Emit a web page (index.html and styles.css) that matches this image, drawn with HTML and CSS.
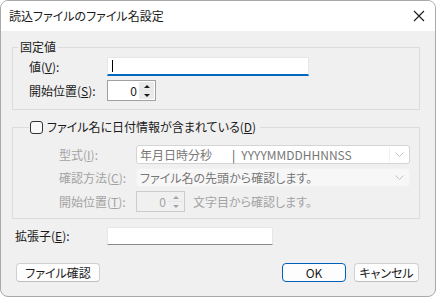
FILE: index.html
```html
<!DOCTYPE html>
<html>
	<head>
		<meta charset="utf-8">
		<link rel="stylesheet" href="styles.css">
	</head>
	<body>
		<div class="window">
			<div class="titlebar">
				<span class="title">読込ファイルのファイル名設定</span>
				<svg class="close" width="12" height="12" viewBox="0 0 12 12">
					<path d="M1 1 L11 11 M11 1 L1 11" stroke="#1a1a1a" stroke-width="1.1" fill="none" />
				</svg>
			</div>
			<div class="content">
				<fieldset class="group fixed">
					<legend>固定値</legend>
					<div class="row first">
						<span class="label">値(<u>V</u>):</span>
						<div class="edit focus"><span class="caret"></span></div>
					</div>
					<div class="row">
						<span class="label">開始位置(<u>S</u>):</span>
						<div class="spin">
							<span class="num">0</span>
							<span class="arrows">
								<span class="up"></span>
								<span class="down"></span>
							</span>
						</div>
					</div>
				</fieldset>

				<fieldset class="group dated">
					<legend><span class="check"></span>ファイル名に日付情報が含まれている(<u>D</u>)</legend>
					<div class="row first">
						<span class="label off">型式(<u>I</u>):</span>
						<div class="combo boxed">
							<span class="text">年月日時分秒<span class="sep">|</span>YYYYMMDDHHNNSS</span>
							<span class="chev"><svg width="9" height="6" viewBox="0 0 9 6"><path d="M0.5 0.5 L4.5 4.5 L8.5 0.5" stroke="#c2c2c2" fill="none" /></svg></span>
						</div>
					</div>
					<div class="row">
						<span class="label off">確認方法(<u>C</u>):</span>
						<div class="combo">
							<span class="text">ファイル名の先頭から確認します。</span>
							<span class="chev"><svg width="9" height="6" viewBox="0 0 9 6"><path d="M0.5 0.5 L4.5 4.5 L8.5 0.5" stroke="#c2c2c2" fill="none" /></svg></span>
						</div>
					</div>
					<div class="row">
						<span class="label off">開始位置(<u>T</u>):</span>
						<div class="spin disabled">
							<span class="num">0</span>
							<span class="arrows">
								<span class="up"></span>
								<span class="down"></span>
							</span>
						</div>
						<span class="hint">文字目から確認します。</span>
					</div>
				</fieldset>

				<div class="ext">
					<span class="label">拡張子(<u>E</u>):</span>
					<div class="edit"></div>
				</div>

				<div class="buttons">
					<button class="btn check-file">ファイル確認</button>
					<span class="spacer"></span>
					<button class="btn ok">OK</button>
					<button class="btn cancel">キャンセル</button>
				</div>
			</div>
		</div>
	</body>
</html>
```

FILE: styles.css
```css
html, body {
	margin: 0;
	height: 100%;
	background: #ffffff;
}
body {
	font-family: "Noto Sans CJK JP", "Noto Sans", sans-serif;
	font-size: 12px;
	font-feature-settings: "palt";
	color: #1a1a1a;
}
u {
	text-decoration-thickness: 1px;
	text-underline-offset: 1px;
}
.window {
	width: 436px;
	height: 297px;
	box-sizing: border-box;
	border: 1px solid #a9a9a9;
	border-radius: 8px;
	overflow: hidden;
	background: #f0f0f0;
	display: flex;
	flex-direction: column;
}
.titlebar {
	height: 30px;
	background: #ffffff;
	display: flex;
	align-items: center;
	padding: 0 0 0 8px;
}
.title {
	flex: 1;
	line-height: 16px;
}
.close {
	margin-right: 10px;
}
.content {
	flex: 1;
	display: flex;
	flex-direction: column;
	padding-top: 8px;
}
.group {
	margin: 0 15px 0 11px;
	border: 1px solid #dcdcdc;
	padding: 0 0 0 16px;
	min-width: 0;
}
.group legend {
	padding: 0 2px;
	line-height: 16px;
}
.fixed legend {
	margin-left: -11px;
}
.fixed {
	padding-top: 2px;
	padding-bottom: 8px;
}
.dated {
	margin-top: 9px;
	padding-top: 10px;
	padding-bottom: 6px;
}
.dated legend {
	display: flex;
	align-items: center;
	padding: 0 4px 0 1px;
}
.check {
	width: 11px;
	height: 11px;
	border: 1px solid #333333;
	border-radius: 3px;
	background: #f8f8f8;
	margin-right: 4px;
}
.row {
	display: flex;
	align-items: center;
	margin-top: 4px;
}
.row.first {
	margin-top: 0;
}
.dated .row {
	margin-top: 4px;
	padding-left: 30px;
}
.dated .row.first {
	margin-top: 0;
}
.label {
	width: 78px;
	flex: none;
	line-height: 16px;
}
.dated .label {
	width: 77px;
}
.off {
	color: #a3a3a3;
}
.edit {
	width: 202px;
	height: 18px;
	box-sizing: border-box;
	background: #ffffff;
	border: 1px solid #e6e6e6;
	border-bottom-color: #8a8a8a;
	border-radius: 2px 2px 0 0;
	display: flex;
	align-items: center;
	padding-left: 4px;
}
.edit.focus {
	height: 19px;
	border-color: #e6e6e6;
	border-bottom: 2px solid #0067c0;
}
.caret {
	width: 1px;
	height: 12px;
	background: #000000;
}
.spin {
	width: 49px;
	height: 21px;
	box-sizing: border-box;
	border: 1px solid #a0a0a0;
	background: #ffffff;
	display: flex;
	align-items: center;
}
.spin .num {
	flex: 1;
	text-align: right;
	padding-right: 2px;
	line-height: 16px;
}
.arrows {
	width: 15px;
	height: 17px;
	margin-right: 1px;
	display: flex;
	flex-direction: column;
	background: #e6e6e6;
	gap: 1px;
}
.arrows span {
	flex: 1;
	display: flex;
	align-items: center;
	justify-content: center;
	background: #eaeaea;
}
.up::before, .down::before {
	content: "";
	border-left: 3px solid transparent;
	border-right: 3px solid transparent;
}
.up::before {
	border-bottom: 3px solid #1a1a1a;
}
.down::before {
	border-top: 3px solid #1a1a1a;
}
.spin.disabled {
	border-color: #cccccc;
	background: #f0f0f0;
	color: #a3a3a3;
}
.spin.disabled .arrows span {
	background: #f0f0f0;
}
.spin.disabled .up::before {
	border-bottom-color: #a3a3a3;
}
.spin.disabled .down::before {
	border-top-color: #a3a3a3;
}
.hint {
	margin-left: 8px;
	color: #a3a3a3;
	line-height: 16px;
}
.combo {
	width: 274px;
	height: 19px;
	box-sizing: border-box;
	background: #f7f7f7;
	border: 1px solid #f2f2f2;
	border-radius: 3px;
	display: flex;
	align-items: center;
	color: #777777;
}
.combo.boxed {
	background: #ffffff;
	border-color: #d4d4d4;
}
.combo .text {
	flex: 1;
	padding-left: 3px;
	line-height: 16px;
	white-space: nowrap;
}
.sep {
	margin: 0 6px 0 20px;
	color: #555555;
}
.chev {
	width: 19px;
	height: 15px;
	display: flex;
	align-items: center;
	justify-content: center;
}
.combo.boxed .chev {
	border-left: 1px solid #f0f0f0;
}
.ext {
	display: flex;
	align-items: center;
	margin: 8px 0 0 14px;
}
.ext .label {
	width: 92px;
}
.ext .edit {
	width: 166px;
}
.buttons {
	display: flex;
	align-items: center;
	margin: 18px 16px 0 15px;
	gap: 8px;
}
.spacer {
	flex: 1;
}
.btn {
	font-family: inherit;
	font-size: 12px;
	font-feature-settings: "palt";
	height: 19px;
	line-height: 15px;
	padding: 0;
	background: #fdfdfd;
	color: #1a1a1a;
	border: 1px solid #d0d0d0;
	border-bottom-color: #bdbdbd;
	border-radius: 4px;
}
.check-file {
	width: 84px;
}
.ok {
	width: 64px;
	border: 1px solid #005fb8;
}
.cancel {
	width: 65px;
}
```
